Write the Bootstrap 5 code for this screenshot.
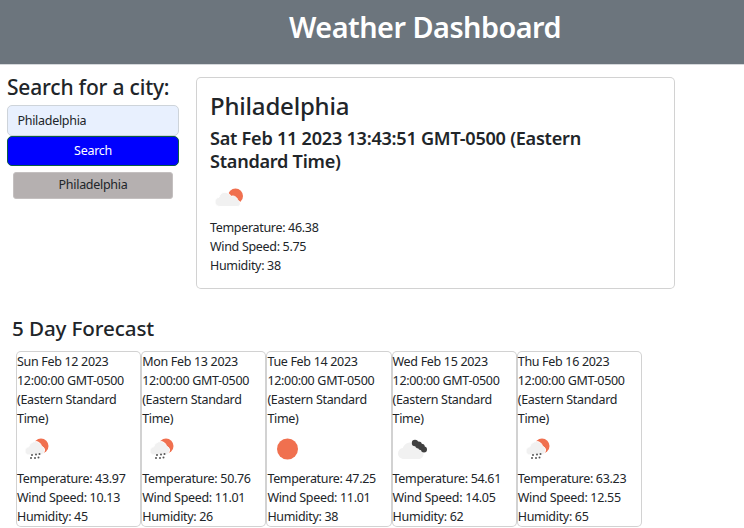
<!DOCTYPE html>
<html lang="en">
<head>
  <meta charset="UTF-8">
  <title>Weather Dashboard</title>
  <link href="https://cdn.jsdelivr.net/npm/bootstrap@5.3.0/dist/css/bootstrap.min.css" rel="stylesheet">
  <style>
    body { font-family: "Noto Sans", "Open Sans", sans-serif; font-size: 12.5px; line-height: 19.2px; color: #212529; letter-spacing: -0.32px; overflow: hidden; }
    h1, h2, h3, h4 { font-family: "Noto Sans", sans-serif; font-weight: 500; line-height: 1.2; }
    .page-head { height: 65px; background: #6c757d; border-bottom: 1px solid #d5d8db; padding: 0 0 9px 289px; }
    .page-head h1 { font-size: 28.8px; font-weight: 600; color: #fff; margin: 0; letter-spacing: -0.5px; }
    .top-area { padding-top: 10px; }
    .side-col { width: 172px; margin-left: 7px; margin-right: 17px; }
    .side-col h3 { font-size: 21px; margin: 0 0 5px; letter-spacing: -0.2px; }
    .city-input { height: 31px; background: #e8f0fe; font-size: 12.5px; padding: 0 9.5px; border-radius: 5px; border-color: #ced4da; letter-spacing: -0.3px; }
    .search-btn { height: 30px; background: #00f; border: 1px solid #0a5c46; color: #fff; font-size: 12.5px; padding: 0; border-radius: 5px; letter-spacing: -0.3px; }
    .history-btn { height: 27px; width: 160px; margin: 6px auto 0; background: #b5b0b0; border: 1px solid #c4c0c0; color: #212529; font-size: 12.5px; padding: 0; border-radius: 3px; letter-spacing: -0.3px; }
    .today-card { width: 479px; height: 212px; margin-top: 2px; padding: 13px; border-radius: 5px; }
    .today-card h2 { font-size: 24px; margin: 1px 0 6px; letter-spacing: -0.2px; }
    .today-card h4 { font-size: 18.1px; font-weight: 600; margin: 0 0 5px; line-height: 23px; letter-spacing: -0.25px; }
    .forecast-title { font-size: 20.6px; margin: 27px 0 10px 12px; letter-spacing: -0.1px; }
    .forecast-row { padding-left: 16px; }
    .day-card { width: 125.2px; height: 176px; border-radius: 5px; }
    .wx-icon { display: block; flex-shrink: 0; width: 40px; height: 40px; }
  </style>
</head>
<body>
  <svg width="0" height="0" class="d-block">
    <defs>
      <path id="cloud" d="M11 30c-3.400 0-6-2.400-6-5.500 0-2.800 2-5 4.800-5.400C11 15.600 14 13.500 17.500 13.500c4.300 0 7.800 3 8.400 7 2.700.300 4.600 2.300 4.600 4.700 0 2.700-2.300 4.800-5 4.800z"/>
      <g id="rain" fill="#555">
        <circle cx="15" cy="26" r="1"/><circle cx="19" cy="25.500" r="1"/><circle cx="22.500" cy="25" r="1"/>
        <circle cx="14" cy="29" r="1"/><circle cx="18" cy="29" r="1"/><circle cx="21.500" cy="28.500" r="1"/>
      </g>
      <symbol id="few-clouds" viewBox="0 0 40 40">
        <circle cx="25.500" cy="18" r="7.500" fill="#f0704f"/>
        <path d="M10 28.500c-3 0-5-2-5-4.500 0-2.400 1.700-4.300 4-4.700.8-3 3-5 6-5 2.800 0 5 1.700 5.800 4.200 1.500-.8 3.500-.6 4.800.5 1.300.9 2.100 2.200 2.200 3.500 1.500.3 2.500 1.500 2.500 3 0 1.700-1.400 3-3.300 3z" fill="#f1f1f1" stroke="#fff" stroke-width="1"/>
      </symbol>
      <symbol id="snow-sun" viewBox="0 0 40 40">
        <circle cx="24" cy="17" r="7.500" fill="#f0704f"/>
        <path d="M12 26c-2.500 0-4-1.800-4-4 0-2.200 1.600-4 3.800-4.200.8-3 3.400-5.300 6.700-5.300 3 0 5.400 1.900 6 4.800 1.800.4 3 2 3 3.700 0 2.300-1.700 5-4 5z" fill="#f1f1f1" stroke="#fff" stroke-width="1"/>
        <use href="#rain"/>
      </symbol>
      <symbol id="clear" viewBox="0 0 40 40">
        <circle cx="20.500" cy="20" r="10.500" fill="#f0704f"/>
      </symbol>
      <symbol id="dark-clouds" viewBox="0 0 40 40">
        <use href="#cloud" fill="#f1f1f1"/>
        <g fill="#404040">
          <circle cx="22" cy="14" r="3.200"/><circle cx="25.500" cy="16" r="3.400"/><circle cx="28.500" cy="18" r="3.300"/><circle cx="31" cy="20.500" r="3"/>
        </g>
      </symbol>
    </defs>
  </svg>

  <header class="page-head d-flex align-items-center">
    <h1>Weather Dashboard</h1>
  </header>

  <div class="top-area d-flex align-items-start">
    <div class="side-col">
      <h3>Search for a city:</h3>
      <input type="text" class="form-control city-input" value="Philadelphia">
      <button class="btn search-btn w-100 d-block">Search</button>
      <button class="btn history-btn d-block">Philadelphia</button>
    </div>
    <div class="card today-card">
      <h2>Philadelphia</h2>
      <h4>Sat Feb 11 2023 13:43:51 GMT-0500 (Eastern Standard Time)</h4>
      <svg class="wx-icon"><use href="#few-clouds"/></svg>
      <div>Temperature: 46.38</div>
      <div>Wind Speed: 5.75</div>
      <div>Humidity: 38</div>
    </div>
  </div>

  <h3 class="forecast-title">5 Day Forecast</h3>
  <div class="forecast-row d-flex">
    <div class="card day-card">
      <div>Sun Feb 12 2023 12:00:00 GMT-0500 (Eastern Standard Time)</div>
      <svg class="wx-icon"><use href="#snow-sun"/></svg>
      <div>Temperature: 43.97</div>
      <div>Wind Speed: 10.13</div>
      <div>Humidity: 45</div>
    </div>
    <div class="card day-card">
      <div>Mon Feb 13 2023 12:00:00 GMT-0500 (Eastern Standard Time)</div>
      <svg class="wx-icon"><use href="#snow-sun"/></svg>
      <div>Temperature: 50.76</div>
      <div>Wind Speed: 11.01</div>
      <div>Humidity: 26</div>
    </div>
    <div class="card day-card">
      <div>Tue Feb 14 2023 12:00:00 GMT-0500 (Eastern Standard Time)</div>
      <svg class="wx-icon"><use href="#clear"/></svg>
      <div>Temperature: 47.25</div>
      <div>Wind Speed: 11.01</div>
      <div>Humidity: 38</div>
    </div>
    <div class="card day-card">
      <div>Wed Feb 15 2023 12:00:00 GMT-0500 (Eastern Standard Time)</div>
      <svg class="wx-icon"><use href="#dark-clouds"/></svg>
      <div>Temperature: 54.61</div>
      <div>Wind Speed: 14.05</div>
      <div>Humidity: 62</div>
    </div>
    <div class="card day-card">
      <div>Thu Feb 16 2023 12:00:00 GMT-0500 (Eastern Standard Time)</div>
      <svg class="wx-icon"><use href="#snow-sun"/></svg>
      <div>Temperature: 63.23</div>
      <div>Wind Speed: 12.55</div>
      <div>Humidity: 65</div>
    </div>
  </div>

  <script src="https://cdn.jsdelivr.net/npm/bootstrap@5.3.0/dist/js/bootstrap.bundle.min.js"></script>
</body>
</html>
